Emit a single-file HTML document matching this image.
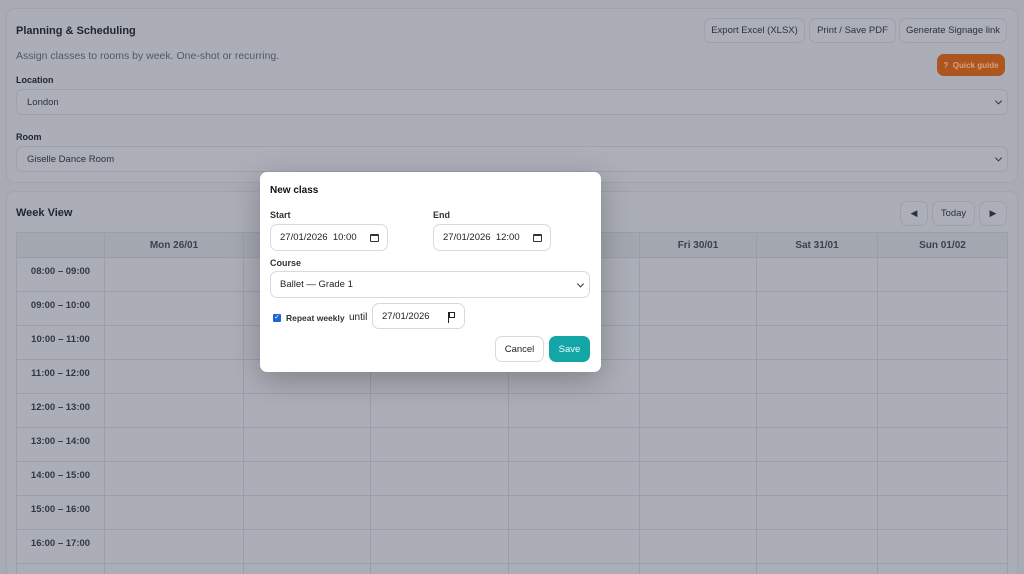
<!DOCTYPE html>
<html><head><style>
*{box-sizing:border-box;margin:0;padding:0}
html{width:1024px;height:574px;overflow:hidden}
body{width:1024px;height:574px;overflow:hidden;background:#a8abb4;font-family:"Liberation Sans",sans-serif;color:#1e2532;position:relative}
.abs{position:absolute}
.card{position:absolute;background:#abaeb7;border:1px solid #9fa3ad;border-radius:9px}
.btn{position:absolute;border:1px solid #9da1ab;border-radius:7px;background:#acafb8;font-size:9.5px;color:#2a3140;display:flex;align-items:center;justify-content:center;white-space:nowrap}
.sel{position:absolute;border:1px solid #9da1ab;border-radius:7px;background:#acafb8;font-size:9.5px;color:#2a3140;padding-left:10px;display:flex;align-items:center}
.chev{position:absolute;right:6px;top:50%;width:5px;height:5px;border-right:1.5px solid #333;border-bottom:1.5px solid #333;transform:translateY(-70%) rotate(45deg)}
.lbl{position:absolute;font-size:9px;font-weight:bold}
.tw{position:absolute;left:0;top:0;width:1024px;height:574px;overflow:hidden}
table{position:absolute;left:16px;top:232px;border-collapse:collapse;font-size:10px;color:#3a4150}
td,th{border:1px solid #9a9eaa;height:34px}
th{height:25px;background:#a3a7b0;font-weight:bold;color:#3a4150}
td.t{text-align:center;font-weight:bold;font-size:9.5px;color:#2f3645;padding-bottom:6px}
.m{position:absolute;left:260px;top:172px;width:341px;height:200px;background:#fff;border-radius:7px;box-shadow:0 8px 30px rgba(0,0,0,.25)}
.in{position:absolute;border:1px solid #d5dae2;border-radius:7px;background:#fff;font-size:9.5px;color:#222;display:flex;align-items:center;padding-left:9px}
.ml{position:absolute;font-size:9px;font-weight:bold;color:#333}
.cal{position:absolute;width:9px;height:8px;border:1.3px solid #333;border-top-width:2.5px;border-radius:1px}
</style></head><body>
<div class="card" style="left:6px;top:8px;width:1012px;height:175px"></div>
<div class="abs" style="left:16px;top:25px;font-size:11px;font-weight:bold">Planning &amp; Scheduling</div>
<div class="abs" style="left:16px;top:50px;font-size:10.5px;color:#50586a">Assign classes to rooms by week. One-shot or recurring.</div>
<div class="btn" style="left:704px;top:18px;width:101px;height:25px">Export Excel (XLSX)</div>
<div class="btn" style="left:809px;top:18px;width:87px;height:25px">Print / Save PDF</div>
<div class="btn" style="left:899px;top:18px;width:108px;height:25px">Generate Signage link</div>
<div class="btn" style="left:937px;top:54px;width:68px;height:22px;background:#ad5520;border-color:#ad5520;color:#d9a27c;font-weight:bold;font-size:8px">?&nbsp; Quick guide</div>
<div class="lbl" style="left:16px;top:75px">Location</div>
<div class="sel" style="left:16px;top:89px;width:992px;height:26px">London<span class="chev"></span></div>
<div class="lbl" style="left:16px;top:132px">Room</div>
<div class="sel" style="left:16px;top:146px;width:992px;height:26px">Giselle Dance Room<span class="chev"></span></div>

<div class="card" style="left:6px;top:191px;width:1012px;height:400px"></div>
<div class="abs" style="left:16px;top:207px;font-size:11px;font-weight:bold">Week View</div>
<div class="btn" style="left:900px;top:201px;width:28px;height:25px;font-size:9px">◀</div>
<div class="btn" style="left:932px;top:201px;width:43px;height:25px">Today</div>
<div class="btn" style="left:979px;top:201px;width:28px;height:25px;font-size:9px">▶</div>
<div class="tw">
<table>
<tr><th style="width:88px"></th><th style="width:139px">Mon 26/01</th><th style="width:127px"></th><th style="width:138px"></th><th style="width:131px"></th><th style="width:117px">Fri 30/01</th><th style="width:121px">Sat 31/01</th><th style="width:130px">Sun 01/02</th></tr>
<tr><td class="t">08:00 – 09:00</td><td></td><td></td><td></td><td></td><td></td><td></td><td></td></tr>
<tr><td class="t">09:00 – 10:00</td><td></td><td></td><td></td><td></td><td></td><td></td><td></td></tr>
<tr><td class="t">10:00 – 11:00</td><td></td><td></td><td></td><td></td><td></td><td></td><td></td></tr>
<tr><td class="t">11:00 – 12:00</td><td></td><td></td><td></td><td></td><td></td><td></td><td></td></tr>
<tr><td class="t">12:00 – 13:00</td><td></td><td></td><td></td><td></td><td></td><td></td><td></td></tr>
<tr><td class="t">13:00 – 14:00</td><td></td><td></td><td></td><td></td><td></td><td></td><td></td></tr>
<tr><td class="t">14:00 – 15:00</td><td></td><td></td><td></td><td></td><td></td><td></td><td></td></tr>
<tr><td class="t">15:00 – 16:00</td><td></td><td></td><td></td><td></td><td></td><td></td><td></td></tr>
<tr><td class="t">16:00 – 17:00</td><td></td><td></td><td></td><td></td><td></td><td></td><td></td></tr>
<tr><td class="t"></td><td></td><td></td><td></td><td></td><td></td><td></td><td></td></tr>
</table>
</div>

<div class="m">
<div class="abs" style="left:10px;top:13px;font-size:10px;font-weight:bold;color:#111">New class</div>
<div class="ml" style="left:10px;top:38px">Start</div>
<div class="ml" style="left:173px;top:38px">End</div>
<div class="in" style="left:10px;top:52px;width:118px;height:27px">27/01/2026&nbsp; 10:00<span class="cal" style="left:99px;top:9px"></span></div>
<div class="in" style="left:173px;top:52px;width:118px;height:27px">27/01/2026&nbsp; 12:00<span class="cal" style="left:99px;top:9px"></span></div>
<div class="ml" style="left:10px;top:86px">Course</div>
<div class="in" style="left:10px;top:99px;width:320px;height:27px">Ballet — Grade 1<span class="chev"></span></div>
<div class="abs" style="left:13px;top:142px;width:8px;height:8px;background:#1a66d2;border-radius:1px;color:#fff;font-size:7px;line-height:8px;text-align:center">✓</div>
<div class="ml" style="left:26px;top:141px;font-size:8.5px">Repeat weekly</div>
<div class="abs" style="left:89px;top:140px;font-size:10px;color:#222">until</div>
<div class="in" style="left:112px;top:131px;width:93px;height:26px">27/01/2026<span class="abs" style="left:75px;top:8px;width:7px;height:11px;border-left:1.5px solid #222"><span class="abs" style="left:0;top:0;width:6px;height:6px;border:1.3px solid #222"></span></span></div>
<div class="in" style="left:235px;top:164px;width:49px;height:26px;padding-left:0;justify-content:center">Cancel</div>
<div class="abs" style="left:289px;top:164px;width:41px;height:26px;background:#14a6a6;border-radius:7px;color:#e8ffff;font-size:9.5px;display:flex;align-items:center;justify-content:center">Save</div>
</div>
</body></html>
